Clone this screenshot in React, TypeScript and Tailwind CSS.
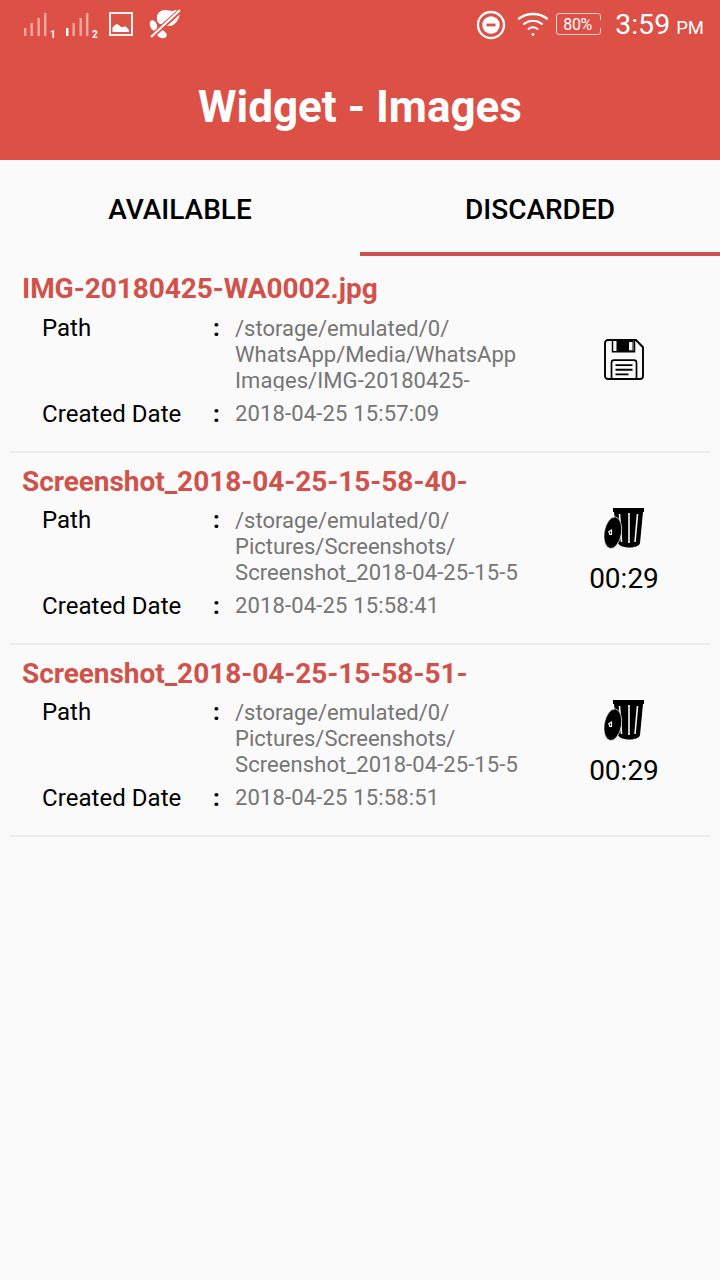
type Item = {
  name: string;
  path: string[];
  date: string;
  timer?: string;
};

const items: Item[] = [
  {
    name: 'IMG-20180425-WA0002.jpg',
    path: ['/storage/emulated/0/', 'WhatsApp/Media/WhatsApp', 'Images/IMG-20180425-'],
    date: '2018-04-25 15:57:09',
  },
  {
    name: 'Screenshot_2018-04-25-15-58-40-',
    path: ['/storage/emulated/0/', 'Pictures/Screenshots/', 'Screenshot_2018-04-25-15-5'],
    date: '2018-04-25 15:58:41',
    timer: '00:29',
  },
  {
    name: 'Screenshot_2018-04-25-15-58-51-',
    path: ['/storage/emulated/0/', 'Pictures/Screenshots/', 'Screenshot_2018-04-25-15-5'],
    date: '2018-04-25 15:58:51',
    timer: '00:29',
  },
];

function Signal({ first }: { first?: boolean }) {
  return (
    <svg width="26" height="28" viewBox="0 0 26 28" fill="#f6a89f">
      <rect x="0" y="17" width="2.4" height="8" fill={first ? '#f6a89f' : '#ffffff'} />
      <rect x="6.5" y="12" width="2.4" height="13" />
      <rect x="13.5" y="7" width="2.4" height="18" />
      <rect x="20" y="2" width="2.4" height="23" />
    </svg>
  );
}

function PictureIcon() {
  return (
    <svg width="24" height="24" viewBox="0 0 24 24">
      <rect x="1" y="1" width="22" height="22" fill="none" stroke="#fff0ee" strokeWidth="2" />
      <path d="M3.5 20v-4.5L6 13l2-1 2.500 1.500 2 2 2.500-1 2 .2 3 3.300v2z" fill="#fff" />
    </svg>
  );
}

function MutedFanIcon() {
  return (
    <svg width="34" height="30" viewBox="0 0 34 30">
      <g fill="#fff">
        <path d="M8 10c-1-5 3-9 8-9 4 0 7 2 10 0l5 1c0 7-4 15-11 15-4 0-6-2-8-2-2 0-4-2-4-5z" />
        <ellipse cx="4.500" cy="16.500" rx="3.400" ry="5.500" transform="rotate(-20 4.500 16.500)" />
        <ellipse cx="12.500" cy="25" rx="5.500" ry="3.800" transform="rotate(25 12.500 25)" />
      </g>
      <path d="M1 29L32 1" stroke="#dc5046" strokeWidth="5" />
      <path d="M2 28L31 1" stroke="#fff" strokeWidth="2.200" />
    </svg>
  );
}

function DoNotDisturbIcon() {
  return (
    <svg width="30" height="30" viewBox="0 0 30 30">
      <circle cx="15" cy="15" r="13" fill="none" stroke="#fff" strokeWidth="2.300" />
      <circle cx="15" cy="15" r="8.700" fill="#fff" />
      <rect x="10.500" y="13.600" width="9" height="2.800" fill="#dc5046" />
    </svg>
  );
}

function WifiIcon() {
  return (
    <svg width="32" height="26" viewBox="0 0 32 26" fill="none" stroke="#fff" strokeLinecap="round">
      <path d="M2 6.500C10 .5 22 .5 30 6.500" strokeWidth="2.400" />
      <path d="M7 11.800c5.500-4 12.500-4 18 0" strokeWidth="2.200" />
      <path d="M11.500 17c2.700-2 6.300-2 9 0" strokeWidth="2" />
      <circle cx="16" cy="22.500" r="1.400" fill="#fff" stroke="none" />
    </svg>
  );
}

function BatteryIcon() {
  return (
    <span className="relative flex h-[22px] w-[45px] items-center rounded-[3px] border border-[#ffd2cb] pl-[6px] pt-px text-[16px] leading-none tracking-[-0.3px] text-white">
      80%
      <span className="absolute -right-px top-[6px] h-2 border-r-2 border-dashed border-[#dc5046]" />
    </span>
  );
}

function FloppyIcon() {
  return (
    <svg width="40" height="41" viewBox="0 0 40 40" preserveAspectRatio="none">
      <path
        d="M4 1h28l7 7v28a3 3 0 0 1-3 3H4a3 3 0 0 1-3-3V4a3 3 0 0 1 3-3z"
        fill="none"
        stroke="#000"
        strokeWidth="1.900"
      />
      <path d="M8.500 1v11.500h22V1" fill="none" stroke="#000" strokeWidth="1.500" />
      <path d="M12.500 1h17v11.500h-17z" fill="#000" />
      <rect x="25" y="3" width="3.500" height="8" fill="#fafafa" />
      <path
        d="M7.500 39V23a2.500 2.500 0 0 1 2.500-2.500h20a2.500 2.500 0 0 1 2.500 2.500v16"
        fill="none"
        stroke="#000"
        strokeWidth="1.700"
      />
      <path d="M11.500 25.500h17M11.500 30h17M11.500 34.500h13" stroke="#000" strokeWidth="1.900" />
    </svg>
  );
}

function TrashIcon() {
  return (
    <svg width="40" height="41" viewBox="0 0 40 41">
      <path d="M9 0h31v4h-1l-3 31c-1 6-20 6-22 0L10 4H9z" fill="#000" />
      <path d="M15.500 6l2 28M25 5v30M33.500 6l-2.500 28" stroke="#fafafa" strokeWidth="1.600" fill="none" />
      <ellipse
        cx="8.800"
        cy="24.700"
        rx="8.600"
        ry="16"
        transform="rotate(10 8.800 24.700)"
        fill="#000"
        stroke="#fafafa"
        strokeWidth="0.700"
      />
      <path d="M7.500 22l-2.700 1.800 1 2.500 1.700 0z" fill="none" stroke="#fafafa" strokeWidth="1.200" />
    </svg>
  );
}

function StatusBar() {
  return (
    <div className="flex h-[50px] items-center pl-6 pr-4 text-white">
      <div className="flex h-7 items-end">
        <Signal first />
        <span className="-mb-0.5 w-4 text-[10px] font-bold leading-3">1</span>
        <Signal />
        <span className="-mb-0.5 w-[17px] text-[10px] font-bold leading-3">2</span>
      </div>
      <div className="-mt-0.5">
        <PictureIcon />
      </div>
      <div className="ml-4 -mt-0.5">
        <MutedFanIcon />
      </div>
      <div className="ml-auto flex items-center">
        <div className="-mt-px">
          <DoNotDisturbIcon />
        </div>
        <span className="ml-[11px] mr-[7px]">
          <WifiIcon />
        </span>
        <div className="-mt-0.5">
          <BatteryIcon />
        </div>
        <span className="ml-[14px] text-[28.5px] leading-none">3:59</span>
        <span className="ml-[6px] pt-[6px] text-[18.5px] leading-none">PM</span>
      </div>
    </div>
  );
}

function Row({ item, first }: { item: Item; first: boolean }) {
  return (
    <li
      className={
        first
          ? 'flex h-[197px] border-b-2 border-[#ececec] pt-4'
          : 'flex h-48 border-b-2 border-[#ececec] pt-3'
      }
    >
      <div className="w-[530px] pl-3">
        <h2
          className={
            first
              ? 'h-[42px] text-[28px] font-bold leading-[34px] tracking-[-0.04px] text-[#d0524a]'
              : 'h-[41px] text-[28px] font-bold leading-[34px] tracking-[-0.04px] text-[#d0524a]'
          }
        >
          {item.name}
        </h2>
        <div className="flex h-[86px] pl-5">
          <span className="w-[171px] text-[24px] leading-7 text-black">Path</span>
          <span className="w-[22px] text-[24px] font-bold leading-7 text-black">:</span>
          <p className="h-[77px] overflow-hidden whitespace-nowrap pt-0.5 text-[22px] leading-[26px] text-[#757575]">
            {item.path.map((line, i) => (
              <span key={line} className={i === 2 ? 'block tracking-[0.08px]' : 'block'}>
                {line}
              </span>
            ))}
          </p>
        </div>
        <div className="flex pl-5">
          <span className="w-[171px] text-[24px] leading-7 tracking-[0.05px] text-black">Created Date</span>
          <span className="w-[22px] text-[24px] font-bold leading-7 text-black">:</span>
          <span className="pt-px text-[22px] leading-[26px] tracking-[0.15px] text-[#757575]">{item.date}</span>
        </div>
      </div>
      <div className="flex w-[168px] flex-col items-center">
        {item.timer ? (
          <div className="flex flex-col items-center pt-[43px]">
            <TrashIcon />
            <span className="mt-[14px] text-[28px] leading-8 text-black">{item.timer}</span>
          </div>
        ) : (
          <div className="pt-[67px]">
            <FloppyIcon />
          </div>
        )}
      </div>
    </li>
  );
}

export default function App() {
  return (
    <div className="flex min-h-[1280px] w-[720px] flex-col bg-[#fafafa] font-['Roboto',sans-serif]">
      <header className="h-40 bg-[#dc5046]">
        <StatusBar />
        <h1 className="flex h-[113px] items-center justify-center text-[44px] font-bold leading-none text-white">
          Widget - Images
        </h1>
      </header>
      <nav className="flex h-24 text-[28px] font-medium text-black">
        <button className="w-1/2 border-b-4 border-transparent pt-[7px]">AVAILABLE</button>
        <button className="w-1/2 border-b-4 border-[#cd5350] pt-[7px]">DISCARDED</button>
      </nav>
      <ul className="px-[10px]">
        {items.map((item, i) => (
          <Row key={item.name} item={item} first={i === 0} />
        ))}
      </ul>
    </div>
  );
}
